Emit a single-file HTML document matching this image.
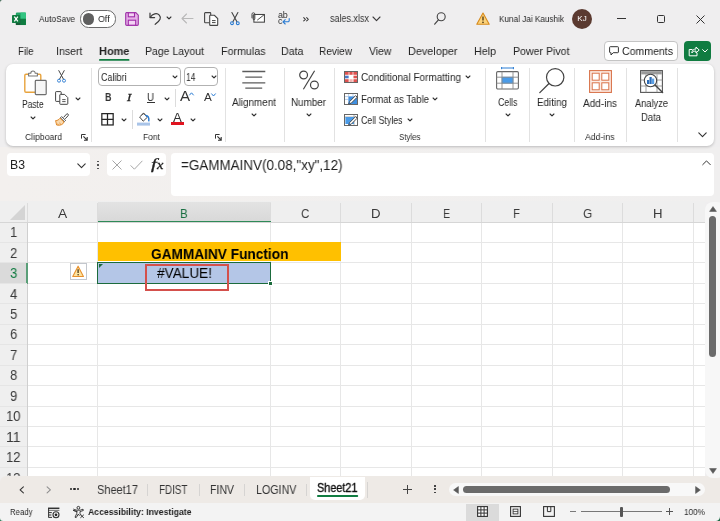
<!DOCTYPE html>
<html>
<head>
<meta charset="utf-8">
<title>sales.xlsx - Excel</title>
<style>
*{box-sizing:border-box;margin:0;padding:0}
html,body{width:720px;height:521px;overflow:hidden}
body{background:#efeeef;font-family:"Liberation Sans",sans-serif;color:#242424;position:relative;font-size:11px}
.a{position:absolute;white-space:nowrap}
.t{position:absolute;white-space:nowrap;line-height:1;transform-origin:0 50%;will-change:transform}
svg{position:absolute;overflow:visible}
/* title */
#title{left:0;top:147px;width:720px;height:55px;background:linear-gradient(90deg,#f3f0ee,#f0efef)}
/* tabs */
.tab{font-size:11.5px;color:#242424;top:46px}
/* ribbon */
#ribbon{left:5.5px;top:64px;width:708.5px;height:82px;background:#fff;border-radius:7px;box-shadow:0 1px 3px rgba(0,0,0,.22)}
.sep{width:1px;background:#e2e2e2;top:67.5px;height:74px}
.glabel{font-size:9.5px;color:#444;top:132px}
.rl{font-size:10.5px;color:#333}
/* formula */
#namebox{left:6.5px;top:153px;width:83px;height:22.5px;background:#fff;border-radius:4px}
#fxbox{left:106.7px;top:153px;width:59.6px;height:22.5px;background:#fff;border-radius:4px}
#fbar{left:170.7px;top:153px;width:543px;height:43.2px;background:#fff;border-radius:4px}
/* grid */
#grid{left:0;top:201px;width:694px;height:276px;background:#fff;overflow:hidden}
.ch{font-size:14px;color:#3a3a3a;top:205px;text-align:center}
.rh{font-size:14.5px;color:#3a3a3a;left:0;width:27px;text-align:center}
.vl{width:1px;background:#e7e7e7;top:222px;height:255px}
.hl{height:1px;background:#e2e2e2;left:27px;width:667px}
</style>
</head>
<body>
<div class="a" id="title"></div>

<!-- TITLE BAR -->
<svg style="left:12px;top:11.6px" width="14.4" height="13.6" viewBox="0 0 15 14">
  <rect x="4" y="0.5" width="10.5" height="13" rx="1.2" fill="#21a366"/>
  <rect x="9" y="0.5" width="5.5" height="6.5" fill="#33c481"/>
  <rect x="9" y="7" width="5.5" height="6.5" fill="#107c41"/>
  <rect x="4" y="7" width="5" height="6.5" fill="#185c37"/>
  <rect x="0" y="3" width="8.5" height="8.5" rx="1" fill="#107c41"/>
  <path d="M2.4 4.8 L6.1 9.7 M6.1 4.8 L2.4 9.7" stroke="#fff" stroke-width="1.3" fill="none"/>
</svg>
<div class="t" style="left:39px;top:14.00px;font-size:9.8px;transform:scaleX(0.8474);color:#262626">AutoSave</div>
<div class="a" style="left:80px;top:10.4px;width:36px;height:17.2px;border:1px solid #6a6a6a;border-radius:8.6px;background:#fff"></div>
<div class="a" style="left:82.6px;top:13.3px;width:11.4px;height:11.4px;border-radius:5.7px;background:#5f5f5f"></div>
<div class="t" style="left:98.3px;top:14.00px;font-size:9.8px;transform:scaleX(0.9076);color:#262626">Off</div>
<!-- save -->
<svg style="left:125px;top:12px" width="14" height="14" viewBox="0 0 14 14">
  <path d="M1.2 0.7 H10.8 L13.3 3.2 V12.3 a1 1 0 0 1 -1 1 H1.7 a1 1 0 0 1 -1 -1 V1.7 a1 1 0 0 1 .5 -1 Z" fill="#e6b0e8" stroke="#a13aaa" stroke-width="1.2"/>
  <rect x="3.3" y="0.8" width="6.2" height="4" fill="#f3d3f4" stroke="#a02ca8" stroke-width="1.1"/>
  <rect x="3.3" y="8.2" width="7.4" height="5" fill="#f3d3f4" stroke="#a02ca8" stroke-width="1.1"/>
</svg>
<!-- undo -->
<svg style="left:149px;top:12px" width="13" height="13" viewBox="0 0 13 13">
  <path d="M1 1 V5.6 H5.6" fill="none" stroke="#3b3b3b" stroke-width="1.2" stroke-linecap="round" stroke-linejoin="round"/>
  <path d="M1.3 5.3 C3.5 1.6 8 0.6 10.3 3.1 C12.6 5.6 11.3 8.6 6.2 12.3" fill="none" stroke="#3b3b3b" stroke-width="1.2" stroke-linecap="round"/>
</svg>
<svg style="left:166.3px;top:16.2px" width="6" height="4" viewBox="0 0 6 4"><path d="M1.1 1 L3 2.9 L4.9 1" fill="none" stroke="#303030" stroke-width="1.15" stroke-linecap="round" stroke-linejoin="round"/></svg>
<!-- redo disabled arrow -->
<svg style="left:181px;top:13px" width="13" height="11" viewBox="0 0 13 11"><path d="M12 5.5 H1 M5.5 1 L1 5.5 L5.5 10" fill="none" stroke="#b9b9b9" stroke-width="1.1" stroke-linecap="round" stroke-linejoin="round"/></svg>
<!-- copy/paste -->
<svg style="left:204px;top:12px" width="15" height="14" viewBox="0 0 15 14">
  <path d="M5.6 10.8 H1.3 a.7 .7 0 0 1 -.7 -.7 V1.3 a.7 .7 0 0 1 .7 -.7 H6 a.7 .7 0 0 1 .7 .7 V3" fill="none" stroke="#444" stroke-width="1.1"/>
  <path d="M6.4 3.3 H10.4 L13.7 6.6 V12.7 a.7 .7 0 0 1 -.7 .7 H6.4 a.7 .7 0 0 1 -.7 -.7 V4 a.7 .7 0 0 1 .7 -.7 Z" fill="#fff" stroke="#444" stroke-width="1.1"/>
  <path d="M8 8.6 H11.6 M8 10.6 H11.6" stroke="#444" stroke-width="1"/>
</svg>
<!-- scissors -->
<svg style="left:230px;top:12px" width="10" height="14" viewBox="0 0 10 14">
  <path d="M1.9 .6 L6.9 9.8 M7.9 .6 L2.9 9.8" fill="none" stroke="#444" stroke-width="1.1" stroke-linecap="round"/>
  <circle cx="2" cy="11.2" r="1.4" fill="none" stroke="#2b7cd3" stroke-width="1.1"/>
  <circle cx="7.8" cy="11.2" r="1.4" fill="none" stroke="#2b7cd3" stroke-width="1.1"/>
</svg>
<!-- email w/ attachment -->
<svg style="left:251.3px;top:12px" width="14.4" height="11.5" viewBox="0 0 15 12">
  <rect x="3" y="2.6" width="11" height="8" fill="#fff" stroke="#444" stroke-width="1.1"/>
  <path d="M6.5 8.5 L13.5 3" stroke="#444" stroke-width="1" fill="none"/>
  <path d="M1 6.5 V2.3 a1.5 1.5 0 0 1 3 0 V7.2 a0.9 0.9 0 0 1 -1.8 0 V3" fill="none" stroke="#444" stroke-width="1"/>
</svg>
<!-- abc -->
<div class="t" style="left:277.5px;top:10.8px;font-size:9px;color:#333;letter-spacing:-.2px">ab</div>
<div class="t" style="left:277.8px;top:16.8px;font-size:9px;color:#333">c</div>
<svg style="left:282px;top:18px" width="8" height="7" viewBox="0 0 8 7"><path d="M7.2 0.5 V2.6 a1.2 1.2 0 0 1 -1.2 1.2 H1.2 M3.2 1.6 L1 3.8 L3.2 6" fill="none" stroke="#2b7cd3" stroke-width="1.1" stroke-linecap="round" stroke-linejoin="round"/></svg>
<!-- more -->
<svg style="left:302.6px;top:17.2px" width="6.4" height="4.6" viewBox="0 0 7 5"><path d="M.8 .7 L2.6 2.5 L.8 4.3 M4 .7 L5.8 2.5 L4 4.3" fill="none" stroke="#333" stroke-width="1.1" stroke-linecap="round" stroke-linejoin="round"/></svg>
<div class="t" style="left:330px;top:14.04px;font-size:10px;transform:scaleX(0.8995);color:#333">sales.xlsx</div>
<svg style="left:372px;top:16px" width="9" height="6" viewBox="0 0 9 6"><path d="M1 1 L4.5 4.6 L8 1" fill="none" stroke="#3b3b3b" stroke-width="1.1" stroke-linecap="round" stroke-linejoin="round"/></svg>
<!-- search -->
<svg style="left:434px;top:12px" width="12" height="13" viewBox="0 0 12 13"><circle cx="7.2" cy="4.8" r="4" fill="none" stroke="#444" stroke-width="1.1"/><path d="M4.4 7.8 L0.7 12.2" stroke="#444" stroke-width="1.2" stroke-linecap="round"/></svg>
<!-- warning -->
<svg style="left:476px;top:12px" width="14" height="13" viewBox="0 0 14 13"><path d="M7 1 L13.2 12.2 H0.8 Z" fill="#fbd27a" stroke="#d78a1c" stroke-width="1.1" stroke-linejoin="round"/><path d="M7 4.6 V8.6" stroke="#4a3410" stroke-width="1.3"/><circle cx="7" cy="10.4" r=".8" fill="#4a3410"/></svg>
<div class="t" style="left:499px;top:13.96px;font-size:9.5px;transform:scaleX(0.8606);color:#2b2b2b">Kunal Jai Kaushik</div>
<div class="a" style="left:572px;top:9px;width:20px;height:20px;border-radius:10px;background:#5b3a30"></div>
<div class="t" style="left:572px;top:15px;width:20px;text-align:center;font-size:8px;color:#fff">KJ</div>
<!-- window controls -->
<div class="a" style="left:617px;top:18px;width:9px;height:1px;background:#333"></div>
<div class="a" style="left:657px;top:15px;width:8px;height:8px;border:1px solid #333;border-radius:1.5px"></div>
<svg style="left:696px;top:15px" width="9" height="9" viewBox="0 0 9 9"><path d="M0.5 0.5 L8.5 8.5 M8.5 0.5 L0.5 8.5" stroke="#333" stroke-width="1" fill="none"/></svg>

<!-- TABS -->
<div class="t" style="left:17.5px;top:46.33px;font-size:11.3px;transform:scaleX(0.8515);color:#242424">File</div>
<div class="t" style="left:55.5px;top:46.33px;font-size:11.3px;transform:scaleX(0.9375);color:#242424">Insert</div>
<div class="t" style="left:99px;top:46.33px;font-size:11.3px;transform:scaleX(0.9716);font-weight:bold;color:#1f1f1f">Home</div>
<svg style="left:99px;top:59.2px" width="31" height="2" viewBox="0 0 31 2"><rect x="0" y="0" width="30.5" height="1.8" rx=".9" fill="#107c41"/></svg>
<div class="t" style="left:145px;top:46.33px;font-size:11.3px;transform:scaleX(0.9298);color:#242424">Page Layout</div>
<div class="t" style="left:221px;top:46.33px;font-size:11.3px;transform:scaleX(0.9449);color:#242424">Formulas</div>
<div class="t" style="left:281px;top:46.33px;font-size:11.3px;transform:scaleX(0.9424);color:#242424">Data</div>
<div class="t" style="left:319px;top:46.33px;font-size:11.3px;transform:scaleX(0.8908);color:#242424">Review</div>
<div class="t" style="left:369px;top:46.33px;font-size:11.3px;transform:scaleX(0.9260);color:#242424">View</div>
<div class="t" style="left:407.5px;top:46.33px;font-size:11.3px;transform:scaleX(0.9612);color:#242424">Developer</div>
<div class="t" style="left:474px;top:46.33px;font-size:11.3px;transform:scaleX(0.9469);color:#242424">Help</div>
<div class="t" style="left:513px;top:46.33px;font-size:11.3px;transform:scaleX(0.9373);color:#242424">Power Pivot</div>
<div class="a" style="left:604px;top:41px;width:74px;height:20px;background:#fff;border:1px solid #c4c4c4;border-radius:4px"></div>
<svg style="left:609px;top:46px" width="10" height="10" viewBox="0 0 10 10"><path d="M1.3 0.7 H8.7 a.7 .7 0 0 1 .7 .7 V6 a.7 .7 0 0 1 -.7 .7 H4.2 L2 9 V6.7 H1.3 a.7 .7 0 0 1 -.7 -.7 V1.4 a.7 .7 0 0 1 .7 -.7 Z" fill="none" stroke="#333" stroke-width="1"/></svg>
<div class="t" style="left:622px;top:45.69px;font-size:11px;transform:scaleX(0.9589);color:#222">Comments</div>
<div class="a" style="left:684px;top:41px;width:27px;height:20px;background:#107c41;border-radius:4px"></div>
<svg style="left:688px;top:45px" width="12" height="12" viewBox="0 0 12 12"><path d="M4.5 4.5 H1.2 V10.8 H9 V8" fill="none" stroke="#fff" stroke-width="1"/><path d="M3.8 8 C4 5.4 5.6 4 8 4 V2 L11.2 5 L8 8 V6 C6.2 6 4.9 6.6 3.8 8 Z" fill="none" stroke="#fff" stroke-width="1" stroke-linejoin="round"/></svg>
<svg style="left:702px;top:49px" width="6" height="4" viewBox="0 0 6 4"><path d="M.6 .6 L3 3 L5.4 .6" fill="none" stroke="#fff" stroke-width="1" stroke-linecap="round"/></svg>

<!-- ribbon panel -->
<div class="a" id="ribbon"></div>

<!-- RIBBON CONTENT -->
<!-- paste -->
<svg style="left:24px;top:70px" width="23" height="26" viewBox="0 0 23 26">
  <path d="M11 22.3 H2 a1.2 1.2 0 0 1 -1.2 -1.2 V5.4 a1.2 1.2 0 0 1 1.2 -1.2 H15.6 a1.2 1.2 0 0 1 1.2 1.2 V10" fill="none" stroke="#e8a33d" stroke-width="1.4"/>
  <path d="M4.6 6 V3.2 H6.8 a2.2 2.2 0 0 1 4.4 0 H13.4 V6 Z" fill="#fff" stroke="#777" stroke-width="1.1" stroke-linejoin="round"/>
  <rect x="11.3" y="10.4" width="10.9" height="14.2" rx=".8" fill="#f6f6f6" stroke="#6e6e6e" stroke-width="1.2"/>
</svg>
<div class="t" style="left:22px;top:99.11px;font-size:10.5px;transform:scaleX(0.8042);color:#262626">Paste</div>
<svg style="left:30px;top:115.5px" width="6" height="4" viewBox="0 0 6 4"><path d="M1.1 1 L3 2.9 L4.9 1" fill="none" stroke="#303030" stroke-width="1.15" stroke-linecap="round" stroke-linejoin="round"/></svg>
<!-- cut -->
<svg style="left:57px;top:70px" width="9" height="13" viewBox="0 0 9 13">
  <path d="M1.8 .6 L6.4 9 M7.2 .6 L2.6 9" fill="none" stroke="#444" stroke-width="1" stroke-linecap="round"/>
  <circle cx="2" cy="10.7" r="1.5" fill="none" stroke="#2b7cd3" stroke-width=".9"/>
  <circle cx="7" cy="10.7" r="1.5" fill="none" stroke="#2b7cd3" stroke-width=".9"/>
</svg>
<!-- copy -->
<svg style="left:55px;top:91px" width="14" height="14" viewBox="0 0 14 14">
  <path d="M4.8 10.4 H1.2 a.6 .6 0 0 1 -.6 -.6 V1.2 a.6 .6 0 0 1 .6 -.6 H5.6 a.6 .6 0 0 1 .6 .6 V3" fill="none" stroke="#444" stroke-width="1"/>
  <path d="M5.4 3.4 H9.6 L12.8 6.6 V12.7 a.6 .6 0 0 1 -.6 .6 H5.4 a.6 .6 0 0 1 -.6 -.6 V4 a.6 .6 0 0 1 .6 -.6 Z" fill="#fff" stroke="#444" stroke-width="1"/>
  <path d="M7.2 8.6 H10.6 M7.2 10.6 H10.6" stroke="#444" stroke-width=".9"/>
</svg>
<svg style="left:75px;top:96.5px" width="6" height="4" viewBox="0 0 6 4"><path d="M1.1 1 L3 2.9 L4.9 1" fill="none" stroke="#303030" stroke-width="1.15" stroke-linecap="round" stroke-linejoin="round"/></svg>
<!-- format painter -->
<svg style="left:55px;top:112.5px" width="14" height="13" viewBox="0 0 14 13">
  <path d="M8.6 4.4 L11.4 1.2 a1.1 1.1 0 0 1 1.7 1.5 L10.2 5.8" fill="#fff" stroke="#444" stroke-width="1" stroke-linejoin="round"/>
  <path d="M6.6 3.6 L10.6 7.4 L9.4 8.6 L5.4 4.8 Z" fill="#fff" stroke="#444" stroke-width=".9" stroke-linejoin="round"/>
  <path d="M5 5.2 L9 9 C8 11.6 5.2 12.8 1.6 12 L.6 7.6 C2.4 7.6 3.8 6.8 5 5.2 Z" fill="#f9d9ae" stroke="#e08a2c" stroke-width="1" stroke-linejoin="round"/>
  <path d="M2.6 10.6 L3.4 12 M4.6 9.6 L5.6 11.6" stroke="#e08a2c" stroke-width=".7"/>
</svg>
<div class="t" style="left:25px;top:132.46px;font-size:9.5px;transform:scaleX(0.9097);color:#2b2b2b">Clipboard</div>
<svg style="left:81px;top:134px" width="7" height="7" viewBox="0 0 7 7"><path d="M.5 4.6 V.5 H4.6" fill="none" stroke="#333" stroke-width="1"/><path d="M2.4 2.4 L6 6 M6.2 3 V6.2 H3" fill="none" stroke="#333" stroke-width="1.1"/></svg>
<div class="a sep" style="left:91px"></div>
<!-- font name / size -->
<div class="a" style="left:98px;top:67px;width:83px;height:19px;border:1px solid #b2b2b2;border-radius:4px;background:#fff"></div>
<div class="t" style="left:100.5px;top:71.61px;font-size:10.5px;transform:scaleX(0.8567);color:#262626">Calibri</div>
<svg style="left:172px;top:75px" width="6" height="4" viewBox="0 0 6 4"><path d="M1.1 1 L3 2.9 L4.9 1" fill="none" stroke="#303030" stroke-width="1.15" stroke-linecap="round" stroke-linejoin="round"/></svg>
<div class="a" style="left:183.5px;top:67px;width:34.5px;height:19px;border:1px solid #b2b2b2;border-radius:4px;background:#fff"></div>
<div class="t" style="left:186px;top:71.61px;font-size:10.5px;transform:scaleX(0.8128);color:#262626">14</div>
<svg style="left:211px;top:75px" width="6" height="4" viewBox="0 0 6 4"><path d="M1.1 1 L3 2.9 L4.9 1" fill="none" stroke="#303030" stroke-width="1.15" stroke-linecap="round" stroke-linejoin="round"/></svg>
<div class="t" style="left:105px;top:91.61px;font-size:10.5px;transform:scaleX(0.8560);font-weight:bold;color:#333">B</div>
<div class="t" style="left:127.2px;top:92.09px;font-size:11px;transform:scaleX(1.1711);font-style:italic;font-family:'Liberation Serif',serif;color:#222;-webkit-text-stroke:.3px #222">I</div>
<div class="t" style="left:147px;top:91.91px;font-size:10.5px;transform:scaleX(0.9218);color:#262626">U</div>
<div class="a" style="left:147px;top:102px;width:7.5px;height:1px;background:#333"></div>
<svg style="left:164px;top:96.5px" width="6" height="4" viewBox="0 0 6 4"><path d="M1.1 1 L3 2.9 L4.9 1" fill="none" stroke="#303030" stroke-width="1.15" stroke-linecap="round" stroke-linejoin="round"/></svg>
<div class="t" style="left:180.3px;top:90.12px;font-size:13.8px;transform:scaleX(1.0975);color:#333">A</div>
<div class="a" style="left:174.5px;top:88.5px;width:1px;height:18px;background:#dcdcdc"></div>
<svg style="left:188.8px;top:91.6px" width="5" height="4" viewBox="0 0 5 4"><path d="M.6 3 L2.5 .8 L4.4 3" fill="none" stroke="#2b7cd3" stroke-width="1" stroke-linecap="round"/></svg>
<div class="t" style="left:203.8px;top:92.49px;font-size:11px;transform:scaleX(1.0621);color:#333">A</div>
<svg style="left:210.5px;top:93px" width="5" height="4" viewBox="0 0 5 4"><path d="M.6 .8 L2.5 3 L4.4 .8" fill="none" stroke="#2b7cd3" stroke-width="1" stroke-linecap="round"/></svg>
<!-- borders -->
<svg style="left:101px;top:112.6px" width="13" height="12.6" viewBox="0 0 13 13"><rect x=".65" y=".65" width="11.7" height="11.7" fill="none" stroke="#262626" stroke-width="1.3"/><path d="M6.5 .6 V12.4 M.6 6.5 H12.4" stroke="#262626" stroke-width="1.3"/></svg>
<svg style="left:121px;top:118px" width="6" height="4" viewBox="0 0 6 4"><path d="M1.1 1 L3 2.9 L4.9 1" fill="none" stroke="#303030" stroke-width="1.15" stroke-linecap="round" stroke-linejoin="round"/></svg>
<div class="a" style="left:132px;top:110px;width:1px;height:19px;background:#dcdcdc"></div>
<!-- fill colour -->
<svg style="left:137.2px;top:112px" width="13" height="14" viewBox="0 0 13 14">
  <path d="M2.6 5 L6.6 1.2 L10.4 5.2 L6.2 9.2 Z" fill="#fff" stroke="#444" stroke-width="1" stroke-linejoin="round"/>
  <path d="M4.4 3.2 C5.4 1.6 7.4 1 8.6 3.2" fill="none" stroke="#444" stroke-width=".9"/>
  <path d="M8.8 3.4 C11 3.4 12.2 5.4 11.8 8.8" fill="none" stroke="#2b7cd3" stroke-width="1.5" stroke-linecap="round"/>
  <rect x="0" y="10.6" width="13" height="3" fill="#a9c4e8"/>
</svg>
<svg style="left:157px;top:118px" width="6" height="4" viewBox="0 0 6 4"><path d="M1.1 1 L3 2.9 L4.9 1" fill="none" stroke="#303030" stroke-width="1.15" stroke-linecap="round" stroke-linejoin="round"/></svg>
<!-- font colour -->
<div class="t" style="left:173.4px;top:111.84px;font-size:12px;transform:scaleX(1.0979);color:#333">A</div>
<div class="a" style="left:171px;top:122.3px;width:13px;height:3.2px;background:#e0131f"></div>
<svg style="left:190px;top:118px" width="6" height="4" viewBox="0 0 6 4"><path d="M1.1 1 L3 2.9 L4.9 1" fill="none" stroke="#303030" stroke-width="1.15" stroke-linecap="round" stroke-linejoin="round"/></svg>
<div class="t" style="left:143px;top:132.46px;font-size:9.5px;transform:scaleX(0.8940);color:#2b2b2b">Font</div>
<svg style="left:215px;top:134px" width="7" height="7" viewBox="0 0 7 7"><path d="M.5 4.6 V.5 H4.6" fill="none" stroke="#333" stroke-width="1"/><path d="M2.4 2.4 L6 6 M6.2 3 V6.2 H3" fill="none" stroke="#333" stroke-width="1.1"/></svg>
<div class="a sep" style="left:225px"></div>
<!-- alignment -->
<svg style="left:242px;top:70px" width="24" height="20" viewBox="0 0 24 20"><path d="M.3 1.5 H23.3 M3.3 7.1 H20.2 M.3 12.8 H23.3 M3.3 18.2 H20.2" stroke="#5c5c5c" stroke-width="1.3" fill="none"/></svg>
<div class="t" style="left:232px;top:97.11px;font-size:10.5px;transform:scaleX(0.9421);color:#262626">Alignment</div>
<svg style="left:251px;top:113px" width="6" height="4" viewBox="0 0 6 4"><path d="M1.1 1 L3 2.9 L4.9 1" fill="none" stroke="#303030" stroke-width="1.15" stroke-linecap="round" stroke-linejoin="round"/></svg>
<div class="a sep" style="left:284px"></div>
<!-- number -->
<svg style="left:299px;top:70px" width="20" height="20" viewBox="0 0 20 20"><circle cx="4.6" cy="5" r="3.9" fill="none" stroke="#444" stroke-width="1.2"/><circle cx="15.4" cy="15" r="3.9" fill="none" stroke="#444" stroke-width="1.2"/><path d="M15.6 .8 L4.4 19.2" stroke="#444" stroke-width="1.2"/></svg>
<div class="t" style="left:291px;top:97.11px;font-size:10.5px;transform:scaleX(0.9368);color:#262626">Number</div>
<svg style="left:306px;top:113px" width="6" height="4" viewBox="0 0 6 4"><path d="M1.1 1 L3 2.9 L4.9 1" fill="none" stroke="#303030" stroke-width="1.15" stroke-linecap="round" stroke-linejoin="round"/></svg>
<div class="a sep" style="left:334px"></div>
<!-- styles icons -->
<svg style="left:344px;top:70.5px" width="14" height="12" viewBox="0 0 14 12">
  <rect x=".5" y=".5" width="13" height="11" fill="#fff" stroke="#666" stroke-width="1"/>
  <rect x="1" y="1" width="12" height="3" fill="#e0524f"/><rect x="1" y="4.4" width="4" height="3.2" fill="#4a78c8"/><rect x="5.2" y="4.4" width="3.8" height="3.2" fill="#fff"/><rect x="9.2" y="4.4" width="3.8" height="3.2" fill="#e0524f"/>
  <rect x="1" y="8" width="4" height="3" fill="#e0524f"/><rect x="5.2" y="8" width="3.8" height="3" fill="#f2b3b0"/><rect x="9.2" y="8" width="3.8" height="3" fill="#e0524f"/>
  <path d="M5 1 V11 M9 1 V11 M1 4.2 H13 M1 7.8 H13" stroke="#fff" stroke-width=".7"/>
</svg>
<svg style="left:344px;top:92.5px" width="14" height="12" viewBox="0 0 14 12">
  <rect x=".5" y=".5" width="13" height="11" fill="#fff" stroke="#666" stroke-width="1"/>
  <path d="M4.6 1 V11 M9 1 V11 M1 3.6 H13 M1 6.4 H13" stroke="#a8c4e6" stroke-width=".8"/>
  <rect x="4.6" y="3.6" width="8.4" height="7.4" fill="#3f8fe0"/>
  <path d="M4.6 11 L5.6 8.6 L11.6 2.6 L13.2 4.2 L7.2 10.2 Z" fill="#fff" stroke="#3b3b3b" stroke-width=".9" stroke-linejoin="round"/><path d="M4.6 11 L5.4 9 L6.8 10.3 Z" fill="#2b6cb8"/>
</svg>
<svg style="left:344px;top:114px" width="14" height="12" viewBox="0 0 14 12">
  <rect x=".5" y=".5" width="13" height="11" fill="#fff" stroke="#666" stroke-width="1"/>
  <path d="M1 3 H13 M10 1 V11" stroke="#999" stroke-width=".8"/>
  <rect x="1.4" y="3" width="8.6" height="7" fill="#4a9be8"/>
  <path d="M4.6 11 L5.6 8.6 L11.6 2.6 L13.2 4.2 L7.2 10.2 Z" fill="#fff" stroke="#3b3b3b" stroke-width=".9" stroke-linejoin="round"/><path d="M4.6 11 L5.4 9 L6.8 10.3 Z" fill="#2b6cb8"/>
</svg>
<div class="t" style="left:361px;top:71.51px;font-size:10.5px;transform:scaleX(0.9466);color:#262626">Conditional Formatting</div>
<svg style="left:465px;top:74.5px" width="6" height="4" viewBox="0 0 6 4"><path d="M1.1 1 L3 2.9 L4.9 1" fill="none" stroke="#303030" stroke-width="1.15" stroke-linecap="round" stroke-linejoin="round"/></svg>
<div class="t" style="left:361px;top:93.51px;font-size:10.5px;transform:scaleX(0.9055);color:#262626">Format as Table</div>
<svg style="left:432px;top:96.5px" width="6" height="4" viewBox="0 0 6 4"><path d="M1.1 1 L3 2.9 L4.9 1" fill="none" stroke="#303030" stroke-width="1.15" stroke-linecap="round" stroke-linejoin="round"/></svg>
<div class="t" style="left:361px;top:114.51px;font-size:10.5px;transform:scaleX(0.8365);color:#262626">Cell Styles</div>
<svg style="left:407px;top:117.5px" width="6" height="4" viewBox="0 0 6 4"><path d="M1.1 1 L3 2.9 L4.9 1" fill="none" stroke="#303030" stroke-width="1.15" stroke-linecap="round" stroke-linejoin="round"/></svg>
<div class="t" style="left:399px;top:132.46px;font-size:9.5px;transform:scaleX(0.8309);color:#2b2b2b">Styles</div>
<div class="a sep" style="left:485px"></div>
<!-- cells -->
<svg style="left:496px;top:67px" width="23" height="23" viewBox="0 0 23 23">
  <path d="M5.6 1 H17.4 M5.6 0 V2.2 M17.4 0 V2.2" stroke="#2b7cd3" stroke-width="1" fill="none"/>
  <rect x=".6" y="4.6" width="21.8" height="17.4" rx="1.2" fill="#fff" stroke="#666" stroke-width="1.1"/>
  <rect x="5.6" y="9.8" width="11.8" height="6.8" fill="#4a9be8"/>
  <path d="M6 4.6 V22 M17 4.6 V22 M.6 10.2 H22.4 M.6 16.2 H22.4" stroke="#8a8a8a" stroke-width=".9" fill="none"/>
</svg>
<div class="t" style="left:497.5px;top:97.11px;font-size:10.5px;transform:scaleX(0.8353);color:#262626">Cells</div>
<svg style="left:504.5px;top:113px" width="6" height="4" viewBox="0 0 6 4"><path d="M1.1 1 L3 2.9 L4.9 1" fill="none" stroke="#303030" stroke-width="1.15" stroke-linecap="round" stroke-linejoin="round"/></svg>
<div class="a sep" style="left:529px"></div>
<!-- editing -->
<svg style="left:538px;top:67px" width="28" height="28" viewBox="0 0 28 28"><circle cx="17.2" cy="10.3" r="8.7" fill="none" stroke="#444" stroke-width="1.2"/><path d="M11 16.5 L1.8 25.6" stroke="#444" stroke-width="1.3" stroke-linecap="round"/></svg>
<div class="t" style="left:536.5px;top:97.11px;font-size:10.5px;transform:scaleX(0.9343);color:#262626">Editing</div>
<svg style="left:549px;top:113px" width="6" height="4" viewBox="0 0 6 4"><path d="M1.1 1 L3 2.9 L4.9 1" fill="none" stroke="#303030" stroke-width="1.15" stroke-linecap="round" stroke-linejoin="round"/></svg>
<div class="a sep" style="left:574px"></div>
<!-- add-ins -->
<svg style="left:589px;top:70px" width="23" height="23" viewBox="0 0 23 23">
  <rect x=".6" y=".6" width="21.8" height="21.8" fill="#fdeee7" stroke="#d9734a" stroke-width="1.1"/>
  <rect x="3.2" y="3.2" width="7" height="7" fill="#fff" stroke="#d9734a" stroke-width="1"/><rect x="12.8" y="3.2" width="7" height="7" fill="#fff" stroke="#d9734a" stroke-width="1"/>
  <rect x="3.2" y="12.8" width="7" height="7" fill="#fff" stroke="#d9734a" stroke-width="1"/><rect x="12.8" y="12.8" width="7" height="7" fill="#fff" stroke="#d9734a" stroke-width="1"/>
</svg>
<div class="t" style="left:583px;top:98.11px;font-size:10.5px;transform:scaleX(0.9548);color:#262626">Add-ins</div>
<div class="t" style="left:585px;top:132.46px;font-size:9.5px;transform:scaleX(0.9156);color:#2b2b2b">Add-ins</div>
<div class="a sep" style="left:626px"></div>
<!-- analyze data -->
<svg style="left:640px;top:70px" width="24" height="24" viewBox="0 0 24 24">
  <rect x=".6" y=".6" width="21.8" height="21.8" fill="#fff" stroke="#555" stroke-width="1.1"/>
  <rect x="1.2" y="1.2" width="20.6" height="3.2" fill="#9a9a9a"/>
  <path d="M6 4.4 V22.4 M17 4.4 V22.4 M.6 10 H22.4 M.6 16 H22.4" stroke="#888" stroke-width=".8" fill="none"/>
  <circle cx="10.5" cy="10.5" r="6.2" fill="#fff" stroke="#444" stroke-width="1.1"/>
  <rect x="7" y="10" width="2.2" height="4" fill="#2b6cb8"/><rect x="9.5" y="7" width="2.2" height="7" fill="#2b6cb8"/><rect x="12" y="8.6" width="2.2" height="5.4" fill="#5aa0e6"/>
  <path d="M15 15 L22.6 22.6" stroke="#444" stroke-width="1.4" stroke-linecap="round"/>
</svg>
<div class="t" style="left:635px;top:98.11px;font-size:10.5px;transform:scaleX(0.8833);color:#262626">Analyze</div>
<div class="t" style="left:641px;top:112.11px;font-size:10.5px;transform:scaleX(0.9014);color:#262626">Data</div>
<div class="a sep" style="left:677px"></div>
<svg style="left:698px;top:132px" width="9" height="6" viewBox="0 0 9 6"><path d="M.8 .8 L4.5 4.6 L8.2 .8" fill="none" stroke="#333" stroke-width="1.1" stroke-linecap="round" stroke-linejoin="round"/></svg>

<!-- formula bar -->
<div class="a" id="namebox"></div>
<div class="a" id="fxbox"></div>
<div class="a" id="fbar"></div>

<!-- FORMULA BAR CONTENT -->
<div class="t" style="left:10px;top:158.84px;font-size:12px;transform:scaleX(1.0213);color:#222">B3</div>
<svg style="left:77px;top:162.5px" width="9" height="6" viewBox="0 0 9 6"><path d="M.8 .8 L4.5 4.6 L8.2 .8" fill="none" stroke="#333" stroke-width="1.1" stroke-linecap="round" stroke-linejoin="round"/></svg>
<div class="a" style="left:97.3px;top:160.5px;width:1.6px;height:1.6px;background:#555"></div>
<div class="a" style="left:97.3px;top:164px;width:1.6px;height:1.6px;background:#555"></div>
<div class="a" style="left:97.3px;top:167.5px;width:1.6px;height:1.6px;background:#555"></div>
<svg style="left:112px;top:159.5px" width="10" height="10" viewBox="0 0 10 10"><path d="M.5 .5 L9.5 9.5 M9.5 .5 L.5 9.5" stroke="#a6a6a6" stroke-width="1" fill="none"/></svg>
<svg style="left:130px;top:160px" width="13" height="10" viewBox="0 0 13 10"><path d="M.6 5.4 L4.4 9.2 L12.4 .8" stroke="#a6a6a6" stroke-width="1" fill="none"/></svg>
<div class="t" style="left:151.3px;top:157.33px;font-size:14.5px;transform:scaleX(1.4140);font-style:italic;font-family:'Liberation Serif',serif;color:#222;-webkit-text-stroke:.3px #222">f</div>
<div class="t" style="left:156.8px;top:160.27px;font-size:11.5px;transform:scaleX(1.2526);font-style:italic;font-family:'Liberation Serif',serif;color:#222;-webkit-text-stroke:.3px #222">x</div>
<div class="t" style="left:180.5px;top:157.73px;font-size:14.5px;transform:scaleX(0.9267);color:#1f1f1f">=GAMMAINV(0.08,"xy",12)</div>
<svg style="left:701.5px;top:160px" width="9" height="5.4" viewBox="0 0 10 6"><path d="M.8 5.2 L5 1 L9.2 5.2" fill="none" stroke="#333" stroke-width="1.1" stroke-linecap="round" stroke-linejoin="round"/></svg>

<!-- grid -->

<!-- GRID -->
<div class="a" style="left:0;top:201px;width:705px;height:275.5px;background:#fff"></div>
<div class="a" style="left:0;top:201px;width:705px;height:21.5px;background:#efefef"></div>
<div class="a" style="left:0;top:222px;width:27.5px;height:254.5px;background:#efefef"></div>
<div class="a" style="left:97.5px;top:201.5px;width:173px;height:20px;background:linear-gradient(#e3e3e3,#d8d8d8)"></div>
<div class="a" style="left:0;top:263px;width:27.5px;height:20.5px;background:#dadada;border-right:1.6px solid #4d9a6f"></div>
<svg style="left:10px;top:205px" width="15" height="15" viewBox="0 0 15 15"><path d="M15 0 V15 H0 Z" fill="#d4d4d4"/></svg>
<div class="a" style="left:27.0px;top:203px;width:1px;height:19px;background:#dcdcdc"></div>
<div class="a" style="left:97.0px;top:203px;width:1px;height:19px;background:#dcdcdc"></div>
<div class="a" style="left:270.0px;top:203px;width:1px;height:19px;background:#dcdcdc"></div>
<div class="a" style="left:340.0px;top:203px;width:1px;height:19px;background:#dcdcdc"></div>
<div class="a" style="left:410.5px;top:203px;width:1px;height:19px;background:#dcdcdc"></div>
<div class="a" style="left:481.0px;top:203px;width:1px;height:19px;background:#dcdcdc"></div>
<div class="a" style="left:551.5px;top:203px;width:1px;height:19px;background:#dcdcdc"></div>
<div class="a" style="left:622.0px;top:203px;width:1px;height:19px;background:#dcdcdc"></div>
<div class="a" style="left:693.0px;top:203px;width:1px;height:19px;background:#dcdcdc"></div>
<div class="a vl" style="left:97.0px;top:222px;height:254.5px"></div>
<div class="a vl" style="left:270.0px;top:222px;height:254.5px"></div>
<div class="a vl" style="left:340.0px;top:222px;height:254.5px"></div>
<div class="a vl" style="left:410.5px;top:222px;height:254.5px"></div>
<div class="a vl" style="left:481.0px;top:222px;height:254.5px"></div>
<div class="a vl" style="left:551.5px;top:222px;height:254.5px"></div>
<div class="a vl" style="left:622.0px;top:222px;height:254.5px"></div>
<div class="a vl" style="left:693.0px;top:222px;height:254.5px"></div>
<div class="a" style="left:27px;top:222px;width:1px;height:254.5px;background:#cfcfcf"></div>
<div class="a" style="left:26.4px;top:263px;width:1.6px;height:20.5px;background:#5a9f78"></div>
<div class="a" style="left:0;top:221.50px;width:705px;height:1px;background:#d6d6d6"></div>
<div class="a" style="left:0;top:241.95px;width:27px;height:1px;background:#e5e5e5"></div>
<div class="a" style="left:28px;top:241.95px;width:677px;height:1px;background:#e7e7e7"></div>
<div class="a" style="left:0;top:262.40px;width:27px;height:1px;background:#e5e5e5"></div>
<div class="a" style="left:28px;top:262.40px;width:677px;height:1px;background:#e7e7e7"></div>
<div class="a" style="left:0;top:282.85px;width:27px;height:1px;background:#e5e5e5"></div>
<div class="a" style="left:28px;top:282.85px;width:677px;height:1px;background:#e7e7e7"></div>
<div class="a" style="left:0;top:303.30px;width:27px;height:1px;background:#e5e5e5"></div>
<div class="a" style="left:28px;top:303.30px;width:677px;height:1px;background:#e7e7e7"></div>
<div class="a" style="left:0;top:323.75px;width:27px;height:1px;background:#e5e5e5"></div>
<div class="a" style="left:28px;top:323.75px;width:677px;height:1px;background:#e7e7e7"></div>
<div class="a" style="left:0;top:344.20px;width:27px;height:1px;background:#e5e5e5"></div>
<div class="a" style="left:28px;top:344.20px;width:677px;height:1px;background:#e7e7e7"></div>
<div class="a" style="left:0;top:364.65px;width:27px;height:1px;background:#e5e5e5"></div>
<div class="a" style="left:28px;top:364.65px;width:677px;height:1px;background:#e7e7e7"></div>
<div class="a" style="left:0;top:385.10px;width:27px;height:1px;background:#e5e5e5"></div>
<div class="a" style="left:28px;top:385.10px;width:677px;height:1px;background:#e7e7e7"></div>
<div class="a" style="left:0;top:405.55px;width:27px;height:1px;background:#e5e5e5"></div>
<div class="a" style="left:28px;top:405.55px;width:677px;height:1px;background:#e7e7e7"></div>
<div class="a" style="left:0;top:426.00px;width:27px;height:1px;background:#e5e5e5"></div>
<div class="a" style="left:28px;top:426.00px;width:677px;height:1px;background:#e7e7e7"></div>
<div class="a" style="left:0;top:446.45px;width:27px;height:1px;background:#e5e5e5"></div>
<div class="a" style="left:28px;top:446.45px;width:677px;height:1px;background:#e7e7e7"></div>
<div class="a" style="left:0;top:466.90px;width:27px;height:1px;background:#e5e5e5"></div>
<div class="a" style="left:28px;top:466.90px;width:677px;height:1px;background:#e7e7e7"></div>
<div class="t" style="left:57.9px;top:206.53px;font-size:13.2px;transform:scaleX(1.0458);color:#3a3a3a">A</div>
<div class="t" style="left:180.1px;top:206.53px;font-size:13.2px;transform:scaleX(0.8867);color:#1a7043">B</div>
<div class="t" style="left:301.3px;top:206.53px;font-size:13.2px;transform:scaleX(0.8813);color:#3a3a3a">C</div>
<div class="t" style="left:371.1px;top:206.53px;font-size:13.2px;transform:scaleX(0.9757);color:#3a3a3a">D</div>
<div class="t" style="left:442.7px;top:206.53px;font-size:13.2px;transform:scaleX(0.8071);color:#3a3a3a">E</div>
<div class="t" style="left:513.3px;top:206.53px;font-size:13.2px;transform:scaleX(0.8558);color:#3a3a3a">F</div>
<div class="t" style="left:582.6px;top:206.53px;font-size:13.2px;transform:scaleX(0.9059);color:#3a3a3a">G</div>
<div class="t" style="left:653.4px;top:206.53px;font-size:13.2px;transform:scaleX(0.9652);color:#3a3a3a">H</div>
<div class="t" style="left:9.5px;top:225.24px;font-size:14.6px;transform:scaleX(0.8985);color:#3a3a3a">1</div>
<div class="t" style="left:9.5px;top:245.64px;font-size:14.6px;transform:scaleX(0.8985);color:#3a3a3a">2</div>
<div class="t" style="left:9.5px;top:266.14px;font-size:14.6px;transform:scaleX(0.8985);color:#107c41">3</div>
<div class="t" style="left:9.5px;top:286.64px;font-size:14.6px;transform:scaleX(0.8985);color:#3a3a3a">4</div>
<div class="t" style="left:9.5px;top:307.04px;font-size:14.6px;transform:scaleX(0.8985);color:#3a3a3a">5</div>
<div class="t" style="left:9.5px;top:327.44px;font-size:14.6px;transform:scaleX(0.8985);color:#3a3a3a">6</div>
<div class="t" style="left:9.5px;top:347.94px;font-size:14.6px;transform:scaleX(0.8985);color:#3a3a3a">7</div>
<div class="t" style="left:9.5px;top:368.34px;font-size:14.6px;transform:scaleX(0.8985);color:#3a3a3a">8</div>
<div class="t" style="left:9.5px;top:388.84px;font-size:14.6px;transform:scaleX(0.8985);color:#3a3a3a">9</div>
<div class="t" style="left:5.9px;top:409.24px;font-size:14.6px;transform:scaleX(0.8993);color:#3a3a3a">10</div>
<div class="t" style="left:5.9px;top:429.74px;font-size:14.6px;transform:scaleX(0.9633);color:#3a3a3a">11</div>
<div class="t" style="left:5.9px;top:450.14px;font-size:14.6px;transform:scaleX(0.8993);color:#3a3a3a">12</div>
<div class="t" style="left:5.9px;top:470.64px;font-size:14.6px;transform:scaleX(0.8993);color:#3a3a3a">13</div>
<div class="a" style="left:97.5px;top:221.1px;width:173px;height:1.2px;background:#2f8a58"></div>
<div class="a" style="left:98px;top:242px;width:243px;height:19.4px;background:#ffc000"></div>
<div class="t" style="left:150.6px;top:245.80px;font-size:15px;transform:scaleX(0.9110);font-weight:bold;color:#000">GAMMAINV Function</div>
<div class="a" style="left:97.2px;top:262.2px;width:173.8px;height:21.6px;background:#b4c6e7;border:1.6px solid #1b6b3c"></div>
<svg style="left:98.6px;top:263.6px" width="4" height="4" viewBox="0 0 4 4"><path d="M0 0 H4 L0 4 Z" fill="#1b6b3c"/></svg>
<div class="a" style="left:268.2px;top:281.2px;width:4.8px;height:4.8px;background:#1b6b3c;border:.8px solid #fff"></div>
<div class="t" style="left:157px;top:266.33px;font-size:14.5px;transform:scaleX(0.9389);color:#000">#VALUE!</div>
<div class="a" style="left:144.8px;top:263.6px;width:84.2px;height:27.8px;border:2px solid #d4504c"></div>
<div class="a" style="left:70px;top:262.8px;width:17px;height:17px;background:#fff;border:1px solid #c3c7cd"></div>
<svg style="left:72px;top:264.8px" width="12.2" height="12.6" viewBox="0 0 13 13"><path d="M6.5 1 L12.2 12 H.8 Z" fill="#fde3a0" stroke="#e8902c" stroke-width="1.15" stroke-linejoin="round"/><path d="M6.5 4.4 V8.4" stroke="#3a2a0c" stroke-width="1.3"/><circle cx="6.5" cy="10.2" r=".8" fill="#3a2a0c"/></svg>
<div class="a" style="left:0;top:476px;width:720px;height:26.5px;background:#eeeae6;border-radius:6px 0 0 0"></div>
<div class="a" style="left:705px;top:201.5px;width:20px;height:276px;background:#f7f7f7;border-radius:8px"></div>
<div class="a" style="left:709px;top:216px;width:6.5px;height:141px;background:#6b6b6b;border-radius:3.5px"></div>
<svg style="left:708.5px;top:206px" width="8" height="6" viewBox="0 0 8 6"><path d="M4 .6 L7.4 5.4 H.6 Z" fill="#5a5a5a" stroke="#5a5a5a" stroke-width=".6" stroke-linejoin="round"/></svg>
<svg style="left:708.5px;top:467.5px" width="8" height="6" viewBox="0 0 8 6"><path d="M4 5.4 L7.4 .6 H.6 Z" fill="#5a5a5a" stroke="#5a5a5a" stroke-width=".6" stroke-linejoin="round"/></svg>


<!-- SHEET TABS -->
<svg style="left:19px;top:485.8px" width="6" height="8" viewBox="0 0 6 8"><path d="M4.4 .9 L1.1 3.9 L4.4 6.9" fill="none" stroke="#333" stroke-width="1.1" stroke-linecap="round" stroke-linejoin="round"/></svg>
<svg style="left:45.5px;top:485.8px" width="6" height="8" viewBox="0 0 6 8"><path d="M1.1 .9 L4.4 3.9 L1.1 6.9" fill="none" stroke="#8f8f8f" stroke-width="1.1" stroke-linecap="round" stroke-linejoin="round"/></svg>
<div class="a" style="left:69.5px;top:487.8px;width:2.3px;height:2.3px;border-radius:1.2px;background:#222"></div>
<div class="a" style="left:73.3px;top:487.8px;width:2.3px;height:2.3px;border-radius:1.2px;background:#222"></div>
<div class="a" style="left:77.1px;top:487.8px;width:2.3px;height:2.3px;border-radius:1.2px;background:#222"></div>
<div class="t" style="left:97px;top:483.84px;font-size:12px;transform:scaleX(0.9168);color:#333">Sheet17</div>
<div class="a" style="left:147px;top:484px;width:1px;height:12px;background:#d6d4d2"></div>
<div class="t" style="left:159px;top:483.84px;font-size:12px;transform:scaleX(0.8220);color:#333">FDIST</div>
<div class="a" style="left:199px;top:484px;width:1px;height:12px;background:#d6d4d2"></div>
<div class="t" style="left:210px;top:483.84px;font-size:12px;transform:scaleX(0.8777);color:#333">FINV</div>
<div class="a" style="left:244px;top:484px;width:1px;height:12px;background:#d6d4d2"></div>
<div class="t" style="left:255.5px;top:483.84px;font-size:12px;transform:scaleX(0.8929);color:#333">LOGINV</div>
<div class="a" style="left:310px;top:476.5px;width:55px;height:23.5px;background:#fff;border-radius:0 0 5px 5px"></div>
<div class="t" style="left:317px;top:482.04px;font-size:12px;transform:scaleX(0.9057);color:#111;-webkit-text-stroke:.35px #111">Sheet21</div>
<svg style="left:316.7px;top:495.2px" width="42" height="2" viewBox="0 0 42 2"><rect x="0" y="0" width="41.2" height="1.9" rx=".9" fill="#107c41"/></svg>
<div class="a" style="left:306px;top:484px;width:1px;height:12px;background:#d6d4d2"></div>
<div class="a" style="left:367px;top:482px;width:1px;height:16px;background:#d6d4d2"></div>
<svg style="left:402.5px;top:484.5px" width="9" height="9" viewBox="0 0 9 9"><path d="M4.5 0 V9 M0 4.5 H9" stroke="#444" stroke-width="1" fill="none"/></svg>
<div class="a" style="left:434.2px;top:485px;width:1.7px;height:1.7px;background:#444"></div>
<div class="a" style="left:434.2px;top:488.3px;width:1.7px;height:1.7px;background:#444"></div>
<div class="a" style="left:434.2px;top:491.6px;width:1.7px;height:1.7px;background:#444"></div>
<div class="a" style="left:449px;top:483px;width:256px;height:12.5px;background:#f8f8f8;border-radius:6.5px"></div>
<div class="a" style="left:463px;top:486px;width:207px;height:6.5px;background:#6b6b6b;border-radius:3.5px"></div>
<svg style="left:452.5px;top:485.5px" width="6" height="8" viewBox="0 0 6 8"><path d="M.6 4 L5.4 .6 V7.4 Z" fill="#5a5a5a" stroke="#5a5a5a" stroke-width=".6" stroke-linejoin="round"/></svg>
<svg style="left:694.5px;top:485.5px" width="6" height="8" viewBox="0 0 6 8"><path d="M5.4 4 L.6 .6 V7.4 Z" fill="#5a5a5a" stroke="#5a5a5a" stroke-width=".6" stroke-linejoin="round"/></svg>

<!-- STATUS BAR -->
<div class="a" style="left:0;top:502.5px;width:720px;height:18.5px;background:#f3f3f3"></div>
<div class="t" style="left:9.5px;top:506.96px;font-size:9.5px;transform:scaleX(0.8191);color:#2b2b2b">Ready</div>
<svg style="left:47.5px;top:506.6px" width="12" height="12" viewBox="0 0 12 12">
  <path d="M0 1.3 H11.4" stroke="#333" stroke-width="1.5"/><path d="M0 3.4 H11.4" stroke="#555" stroke-width=".8"/>
  <path d="M.6 1 V10.6" stroke="#333" stroke-width="1"/>
  <path d="M.6 5.6 H3.8 M.6 8 H3.4 M.6 10.4 H4" stroke="#333" stroke-width="1"/>
  <circle cx="8" cy="7.8" r="3" fill="#f3f3f3" stroke="#333" stroke-width="1.1"/><circle cx="8" cy="7.8" r="1.35" fill="#222"/>
</svg>
<svg style="left:73px;top:506px" width="12" height="12" viewBox="0 0 12 12">
  <circle cx="5.4" cy="1.8" r="1.4" fill="none" stroke="#333" stroke-width="1"/>
  <path d="M.8 3.2 C2.4 4 3.8 4.3 5.4 4.3 C7 4.3 8.4 4 10 3.2 L10.4 4.4 C9.2 5 8.2 5.3 7 5.5 V7.4 L8 9 M3.8 5.5 C2.6 5.3 1.6 5 .4 4.4 Z M3.8 5.5 V7.4 L2 11.2 L3.2 11.6 L5.4 8 L6.2 9.4" fill="none" stroke="#333" stroke-width=".95" stroke-linejoin="round" stroke-linecap="round"/>
  <path d="M7.4 8.8 L10.8 11.8 M10.8 8.8 L7.4 11.8" fill="none" stroke="#333" stroke-width="1"/>
</svg>
<div class="t" style="left:88px;top:506.96px;font-size:9.5px;transform:scaleX(0.9116);font-weight:bold;color:#222">Accessibility: Investigate</div>
<div class="a" style="left:466.4px;top:503.5px;width:32.3px;height:17.5px;background:#dbdbdb"></div>
<svg style="left:477px;top:506px" width="11" height="11" viewBox="0 0 11 11"><rect x=".6" y=".6" width="9.8" height="9.8" fill="#fff" stroke="#333" stroke-width="1.1"/><path d="M3.9 .6 V10.4 M7.1 .6 V10.4 M.6 3.9 H10.4 M.6 7.1 H10.4" stroke="#333" stroke-width="1"/></svg>
<svg style="left:510px;top:506px" width="11" height="11" viewBox="0 0 11 11"><rect x=".6" y=".6" width="9.8" height="9.8" fill="none" stroke="#333" stroke-width="1.1"/><rect x="3.1" y="3.1" width="4.8" height="4.8" fill="#f3f3f3" stroke="#333" stroke-width=".9"/><path d="M3.1 5.5 H7.9" stroke="#333" stroke-width=".7"/></svg>
<svg style="left:543px;top:506px" width="12" height="11" viewBox="0 0 12 11"><rect x=".6" y=".6" width="10.8" height="9.8" fill="none" stroke="#333" stroke-width="1.1"/><path d="M4.4 .6 V5.6 H7.8 V.6" fill="none" stroke="#333" stroke-width="1"/></svg>
<div class="a" style="left:569.5px;top:511.3px;width:6.5px;height:1px;background:#7a7a7a"></div>
<div class="a" style="left:581px;top:511.3px;width:81px;height:1px;background:#777"></div>
<div class="a" style="left:619.5px;top:507px;width:3.6px;height:10px;background:#555;border-radius:1px"></div>
<svg style="left:666px;top:508.3px" width="7" height="7" viewBox="0 0 7 7"><path d="M3.5 0 V7 M0 3.5 H7" stroke="#555" stroke-width="1" fill="none"/></svg>
<div class="t" style="left:684px;top:506.96px;font-size:9.5px;transform:scaleX(0.8638);color:#2b2b2b">100%</div>

<!-- window corners -->
<svg style="left:0;top:0" width="3" height="3" viewBox="0 0 3 3"><path d="M0 0 H2.4 A2.4 2.4 0 0 0 0 2.4 Z" fill="#1d4d36"/></svg>
<svg style="left:715px;top:516px" width="5" height="5" viewBox="0 0 5 5"><path d="M5 5 H.6 A4.4 4.4 0 0 0 5 .6 Z" fill="#1f6b48"/></svg>
<svg style="left:0;top:517px" width="4" height="4" viewBox="0 0 4 4"><path d="M0 4 H3.2 A3.2 3.2 0 0 1 0 .8 Z" fill="#2a7a55"/></svg>
</body>
</html>
